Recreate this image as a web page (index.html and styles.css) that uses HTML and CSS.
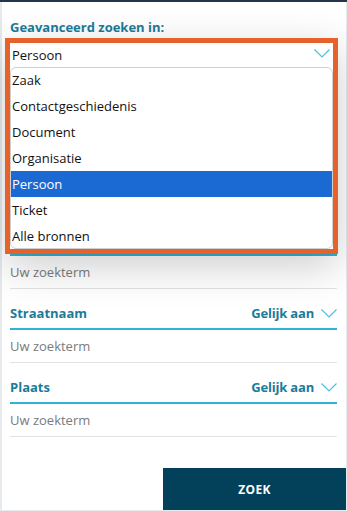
FILE: index.html
```html
<!DOCTYPE html>
<html lang="nl">
<head>
<meta charset="utf-8">
<title>Geavanceerd zoeken</title>
<link rel="stylesheet" href="styles.css">
</head>
<body>
<div class="topbar"></div>
<div class="panel">
  <div class="content">
    <h2 class="title">Geavanceerd zoeken in:</h2>
    <div class="select-box">
      <div class="select-row">
        <span>Persoon</span>
        <svg class="chev" width="16" height="9" viewBox="0 0 16 9"><path d="M0.5 0.5 L8 8 L15.5 0.5" fill="none" stroke="#4fbde2" stroke-width="1.2"/></svg>
      </div>
      <ul class="options">
        <li>Zaak</li>
        <li>Contactgeschiedenis</li>
        <li>Document</li>
        <li>Organisatie</li>
        <li class="selected">Persoon</li>
        <li>Ticket</li>
        <li>Alle bronnen</li>
      </ul>
    </div>
    <div class="field first">
      <div class="input">Uw zoekterm</div>
    </div>
    <div class="field">
      <div class="head">
        <span class="label">Straatnaam</span>
        <span class="op"><span>Gelijk aan</span><svg class="chev" width="16" height="9" viewBox="0 0 16 9"><path d="M0.5 0.5 L8 8 L15.5 0.5" fill="none" stroke="#4fbde2" stroke-width="1.2"/></svg></span>
      </div>
      <div class="input">Uw zoekterm</div>
    </div>
    <div class="field">
      <div class="head">
        <span class="label">Plaats</span>
        <span class="op"><span>Gelijk aan</span><svg class="chev" width="16" height="9" viewBox="0 0 16 9"><path d="M0.5 0.5 L8 8 L15.5 0.5" fill="none" stroke="#4fbde2" stroke-width="1.2"/></svg></span>
      </div>
      <div class="input">Uw zoekterm</div>
    </div>
  </div>
  <div class="footer">
    <button class="zoek">ZOEK</button>
  </div>
</div>
</body>
</html>
```
FILE: styles.css
```css
html, body {
  margin: 0;
  padding: 0;
}
body {
  background: #e6eaec;
  font-family: "Open Sans", "Liberation Sans", sans-serif;
  font-size: 13px;
  color: #111;
  width: 347px;
  height: 511px;
  overflow: hidden;
}
.topbar {
  height: 2px;
  background: #24364a;
}
.panel {
  margin-left: 2px;
  width: 344px;
  height: 508px;
  background: #fff;
  display: flex;
  flex-direction: column;
}
.content {
  padding: 15px 9px 0 8px;
  flex: 1;
}
.title {
  margin: 0 0 1px 0;
  font-size: 13px;
  font-weight: 700;
  line-height: 20px;
  color: #1b7b9a;
}
.select-box {
  margin: 0 -1px 0 -5px;
  border: 5px solid #e5622a;
  background: #fff;
  box-shadow: 0 12px 40px rgba(0, 0, 0, 0.2);
  position: relative;
  z-index: 2;
}
.select-row {
  height: 24px;
  display: flex;
  align-items: center;
  justify-content: space-between;
  padding: 0 3px 0 2px;
  line-height: 18px;
}
.select-row .chev {
  margin-top: -4px;
}
.options {
  list-style: none;
  margin: 0;
  padding: 0;
  border: 1px solid #cfcfcf;
  border-radius: 6px;
  overflow: hidden;
  height: 180px;
}
.options li {
  height: 26px;
  line-height: 26px;
  padding-left: 2px;
  margin-left: -1px;
  margin-right: -1px;
}
.options li:first-child {
  margin-top: -1px;
}
.options li.selected {
  background: #1b69d3;
  color: #fff;
}
.field.first {
  border-top: 2px solid #2fb3d7;
}
.head {
  display: flex;
  justify-content: space-between;
  align-items: flex-end;
  padding-bottom: 6px;
  box-sizing: border-box;
  border-bottom: 2px solid #2fb3d7;
  height: 41px;
  line-height: 18px;
}
.label {
  font-weight: 700;
  color: #1b7b9a;
}
.op {
  font-weight: 700;
  color: #1b7b9a;
  display: flex;
  align-items: center;
  gap: 7px;
  letter-spacing: -0.2px;
}
.op .chev {
  margin-top: 1px;
}
.input {
  height: 33px;
  line-height: 33px;
  color: #7a7a7a;
  border-bottom: 1px solid #e3e3e3;
  box-sizing: border-box;
}
.footer {
  display: flex;
  justify-content: flex-end;
}
.zoek {
  width: 183px;
  height: 42px;
  border: 0;
  background: #03415b;
  color: #fff;
  font-family: "Open Sans", "Liberation Sans", sans-serif;
  font-weight: 700;
  font-size: 12px;
  letter-spacing: 0.3px;
}
```
